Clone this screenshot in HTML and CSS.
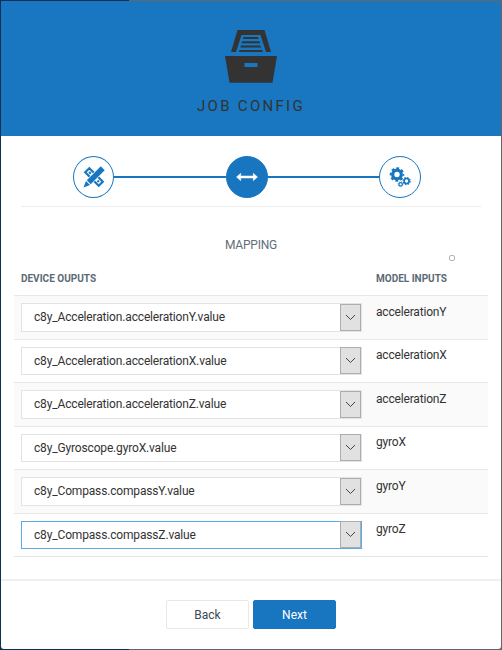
FILE: index.html
```html
<!DOCTYPE html>
<html lang="en">
<head>
<meta charset="utf-8">
<title>Job config</title>
<link rel="stylesheet" href="styles.css">
</head>
<body>
<main class="modal">
  <header class="header">
    <svg class="drawer" width="54" height="54" viewBox="0 0 54 54" fill="#333">
      <path d="M13.500 0H40.500l6.500 22h-5L36.500 5H17.500l-5.500 17h-5z"/>
      <path d="M19.500 7h14.500l.6 2H18.900zM18.300 11.300h17.200l.6 2H17.700zM17 15.600h19.500l.6 2H16.400zM15.500 20h22.800l.6 2H14.900z"/>
      <path fill-rule="evenodd" d="M1 26h52l-4.500 26.700h-43zM20.500 33v4h13V33z"/>
    </svg>
    <h1 class="title">JOB CONFIG</h1>
  </header>
  <section class="body">
    <nav class="steps">
      <span class="step">
        <svg width="22" height="22" viewBox="0 0 22 22" fill="#1776bf">
          <g transform="rotate(45 11 11)" fill="none" stroke="#1776bf" stroke-width="2.200">
            <path d="M8 8.100H1.500v5.800h7M4 11h2.500M14 8.100h6.500v5.800h-7M16 11h2"/>
          </g>
          <path d="M17.800.3l3.900 3.900L7.700 18.200l-3.900-3.900zM3 15l4 4L.5 21.500z" stroke="#fff" stroke-width="1.200" paint-order="stroke"/>
        </svg>
      </span>
      <span class="track"></span>
      <span class="step current">
        <svg width="22" height="10" viewBox="0 0 22 10" fill="#fff">
          <path d="M.5 5L4.700 1.300V4H17.300V1.300L21.500 5 17.300 8.700V6H4.700v2.700z" stroke="#fff" stroke-width=".5" stroke-linejoin="round"/>
        </svg>
      </span>
      <span class="track"></span>
      <span class="step">
        <svg width="22" height="22" viewBox="0 0 22 22" fill="none" stroke="#1776bf">
          <circle cx="8" cy="8.500" r="4.300" stroke-width="3.200"/>
          <circle cx="8" cy="8.500" r="6.300" stroke-width="2" stroke-dasharray="2.800 2.148" stroke-dashoffset="1.400"/>
          <circle cx="17.600" cy="15" r="2.500" stroke-width="1.700"/>
          <circle cx="17.600" cy="15" r="3.600" stroke-width="1.100" stroke-dasharray="1.500 1.327"/>
          <circle cx="11.600" cy="18.300" r="1.700" stroke-width="1.200"/>
          <circle cx="11.600" cy="18.300" r="2.500" stroke-width=".8" stroke-dasharray="1 .963"/>
        </svg>
      </span>
    </nav>
    <h2 class="subtitle">MAPPING</h2>
    <div class="cursor"><i></i></div>
    <div class="table">
      <div class="head"><span>DEVICE OUPUTS</span><span>MODEL INPUTS</span></div>
      <div class="row"><div class="select"><span>c8y_Acceleration.accelerationY.value</span><b><svg width="11" height="7" viewBox="0 0 11 7"><path d="M1 1l4.500 4.500L10 1"/></svg></b></div><span class="name">accelerationY</span></div>
      <div class="row"><div class="select"><span>c8y_Acceleration.accelerationX.value</span><b><svg width="11" height="7" viewBox="0 0 11 7"><path d="M1 1l4.500 4.500L10 1"/></svg></b></div><span class="name">accelerationX</span></div>
      <div class="row"><div class="select"><span>c8y_Acceleration.accelerationZ.value</span><b><svg width="11" height="7" viewBox="0 0 11 7"><path d="M1 1l4.500 4.500L10 1"/></svg></b></div><span class="name">accelerationZ</span></div>
      <div class="row"><div class="select"><span>c8y_Gyroscope.gyroX.value</span><b><svg width="11" height="7" viewBox="0 0 11 7"><path d="M1 1l4.500 4.500L10 1"/></svg></b></div><span class="name">gyroX</span></div>
      <div class="row"><div class="select"><span>c8y_Compass.compassY.value</span><b><svg width="11" height="7" viewBox="0 0 11 7"><path d="M1 1l4.500 4.500L10 1"/></svg></b></div><span class="name">gyroY</span></div>
      <div class="row"><div class="select focused"><span>c8y_Compass.compassZ.value</span><b><svg width="11" height="7" viewBox="0 0 11 7"><path d="M1 1l4.500 4.500L10 1"/></svg></b></div><span class="name">gyroZ</span></div>
    </div>
  </section>
  <footer class="footer">
    <button class="btn">Back</button>
    <button class="btn primary">Next</button>
  </footer>
</main>
</body>
</html>
```
FILE: styles.css
```css
* { box-sizing: border-box; }
body {
  margin: 0;
  padding: 1px;
  height: 650px;
  overflow: hidden;
  background: linear-gradient(90deg, #0b3154 129px, #666 129px);
  font-family: Roboto, "Liberation Sans", sans-serif;
  font-size: 12px;
  color: #333;
}
.modal {
  display: flex;
  flex-direction: column;
  height: 648px;
  background: #fff;
  border-radius: 0 0 3px 3px;
  overflow: hidden;
}
.header {
  height: 135px;
  flex: none;
  padding-top: 29px;
  background: #1976c0;
  text-align: center;
}
.drawer { display: block; margin: 0 auto; }
.title {
  margin: 12px 0 0;
  font-size: 15px;
  line-height: 20px;
  font-weight: 400;
  letter-spacing: 2.3px;
}
.body { height: 443px; flex: none; padding: 20px 13px 0; }
.steps {
  display: flex;
  align-items: center;
  height: 51px;
  margin: 0 7px;
  padding: 0 60px 9px 52px;
  border-bottom: 1px solid #eee;
}
.step {
  display: flex;
  align-items: center;
  justify-content: center;
  flex: none;
  width: 41px;
  height: 42px;
  border: 1px solid #1776bf;
  border-radius: 50%;
}
.step:last-child { width: 42px; margin-left: -1px; padding-right: 1px; }
.step svg { display: block; flex: none; }
.current { width: 42px; background: #1776bf; }
.track { flex: 1; height: 2px; background: #1776bf; }
.subtitle {
  margin: 30px 0 0;
  line-height: 16px;
  font-size: 12px;
  font-weight: 400;
  letter-spacing: -.2px;
  color: #5f6f7a;
  text-align: center;
}
.cursor { height: 9px; padding: 2px 0 0 435px; }
.cursor i {
  display: block;
  width: 6px;
  height: 6px;
  border: 1px solid #b5b2c2;
  border-radius: 2px;
}
.table { border-bottom: 1px solid #e5e5e5; }
.head, .row {
  display: grid;
  grid-template-columns: 341px 1fr;
  column-gap: 14px;
  padding: 0 7px;
}
.head {
  height: 33px;
  padding-top: 10px;
  line-height: 14px;
  font-size: 10px;
  font-weight: 700;
  color: #5b6a75;
}
.row {
  height: 43.5px;
  padding-top: 7px;
  border-top: 1px solid #e8e8e8;
}
.row:nth-child(even) { background: #fafafa; }
.select {
  display: flex;
  align-items: center;
  justify-content: space-between;
  height: 28.5px;
  padding-left: 12px;
  border: 1px solid #e3e3e3;
  background: #fff;
  letter-spacing: -.16px;
}
.select b {
  display: flex;
  align-items: center;
  justify-content: center;
  width: 21px;
  height: 27px;
  border: 1px solid #adadad;
  background: #e1e1e1;
}
.select path { fill: none; stroke: #444; stroke-width: 1; }
.focused { border-color: #5caae5; }
.name { padding-top: 1.8px; line-height: 15px; letter-spacing: -.18px; }
.footer {
  display: flex;
  justify-content: center;
  gap: 4px;
  flex: 1;
  padding-top: 19px;
  border-top: 2px solid #f0f0f0;
}
.btn {
  width: 83px;
  height: 29px;
  padding: 0;
  border: 1px solid #e8e8e8;
  border-radius: 2px;
  background: #fff;
  color: #3c4a54;
  font: 12px Roboto, "Liberation Sans", sans-serif;
}
.primary { border-color: #1776bf; background: #1776bf; color: #fff; }
```
